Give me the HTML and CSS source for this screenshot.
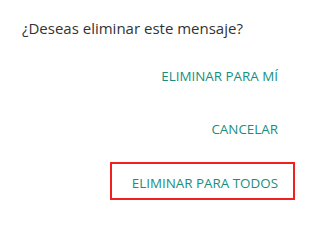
FILE: index.html
```html
<!DOCTYPE html>
<html>
<head>
<meta charset="utf-8">
<link rel="stylesheet" href="styles.css">
</head>
<body>
<div class="dialog">
  <p class="title">¿Deseas eliminar este mensaje?</p>
  <div class="actions">
    <span class="btn btn-me">ELIMINAR PARA MÍ</span>
    <span class="btn btn-cancel">CANCELAR</span>
    <span class="btn btn-all">ELIMINAR PARA TODOS</span>
  </div>
</div>
</body>
</html>
```
FILE: styles.css
```css
html, body {
  margin: 0;
  padding: 0;
  background: #ffffff;
}
.dialog {
  width: 300px;
  height: 210px;
  box-sizing: border-box;
  padding: 17.5px 22px 0 22px;
  font-family: "Open Sans", Roboto, sans-serif;
}
.title {
  margin: 0;
  font-size: 15px;
  line-height: 20px;
  color: #333333;
}
.actions {
  display: flex;
  flex-direction: column;
  align-items: flex-end;
  margin-top: 30px;
}
.btn {
  display: block;
  font-size: 13.4px;
  line-height: 16px;
  color: #178f7f;
}
.btn-cancel {
  margin-top: 37.5px;
}
.btn-all {
  margin-top: 24.5px;
  margin-right: -17px;
  padding: 11px 15px 7px 20px;
  border: 2px solid #f02020;
}
```
